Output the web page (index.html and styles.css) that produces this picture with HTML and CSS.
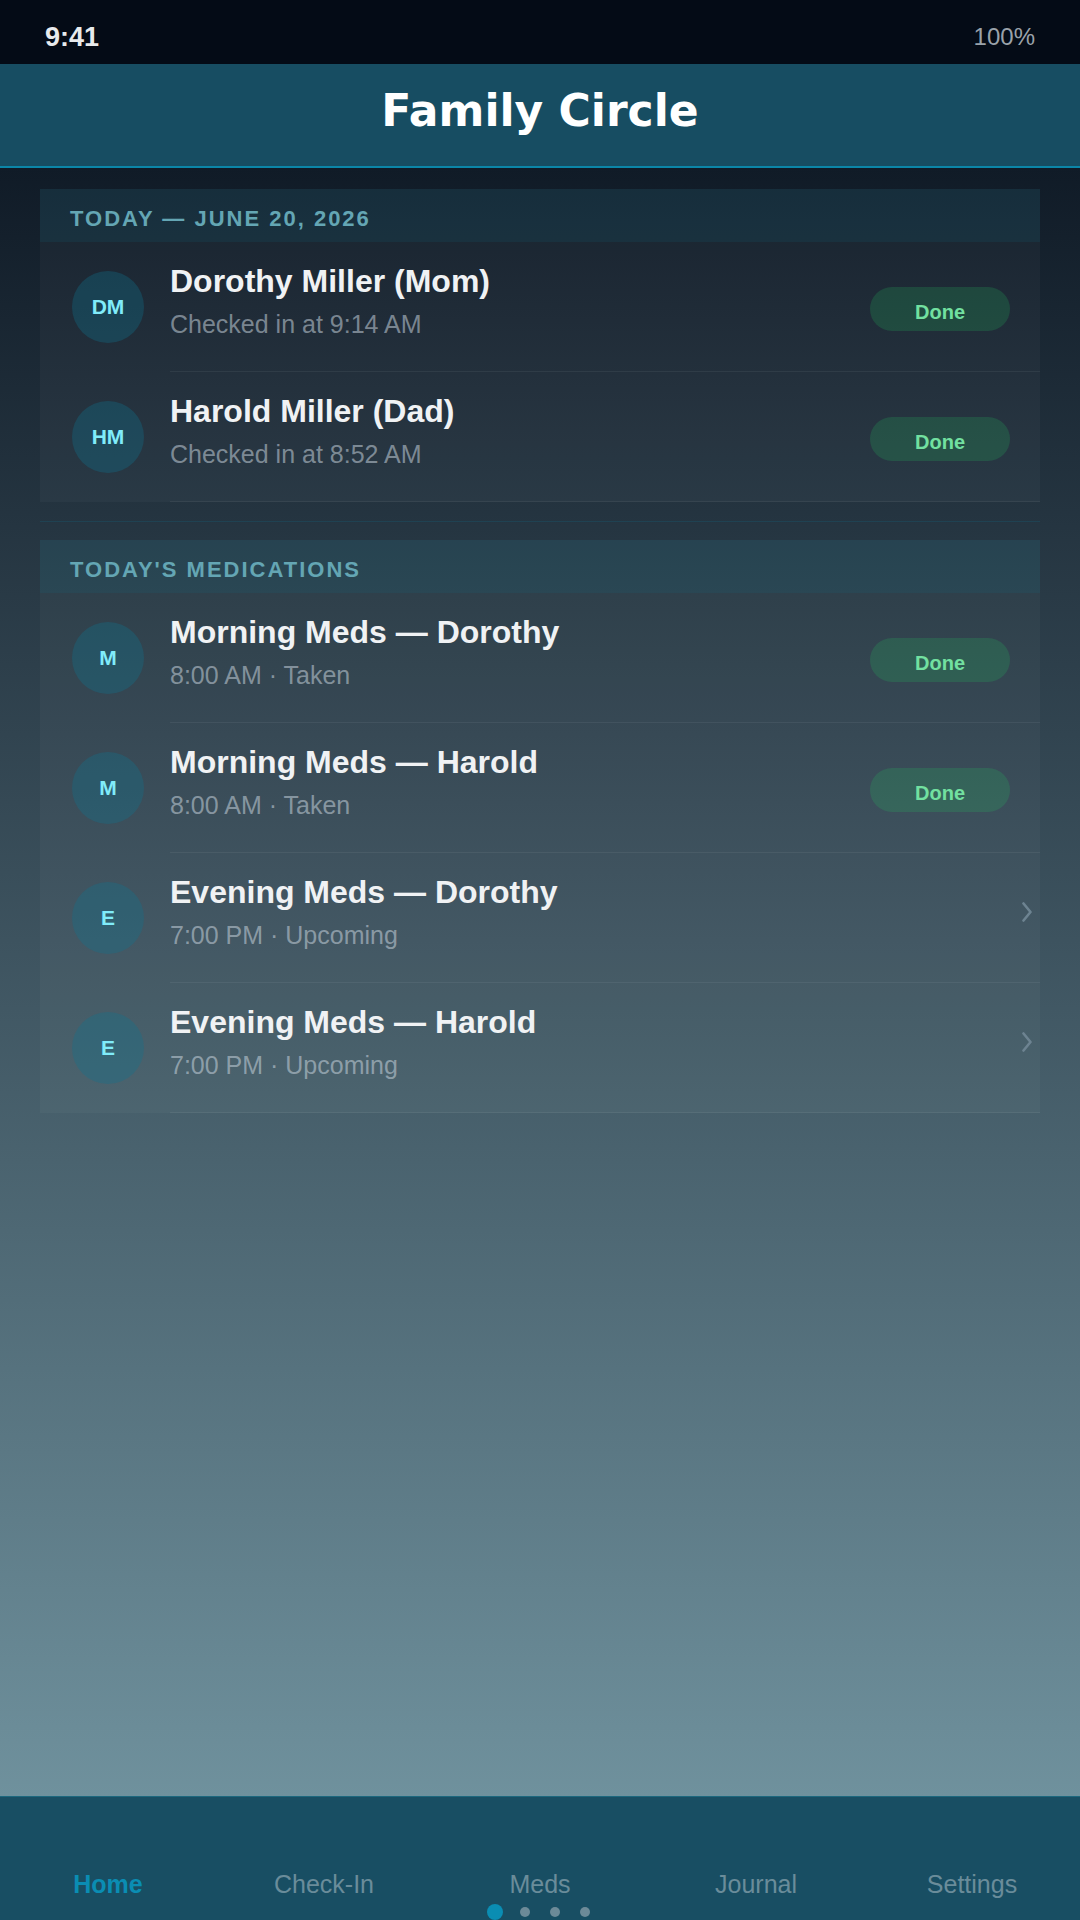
FILE: index.html
```html
<!DOCTYPE html>
<html lang="en">
<head>
  <meta charset="UTF-8" />
  <meta name="viewport" content="width=device-width, initial-scale=1.0" />
  <title>Family Circle</title>
  <link rel="stylesheet" href="styles.css">
</head>
<body>
  <div class="screen">
    <div class="status-bar">
      <span class="time">9:41</span>
      <span class="battery">100%</span>
    </div>

    <header class="app-header">
      <h1>Family Circle</h1>
    </header>

    <main class="content">
      <section class="card">
        <h2 class="card-title">TODAY — JUNE 20, 2026</h2>

        <div class="row">
          <div class="avatar">DM</div>
          <div class="row-body">
            <div class="info">
              <div class="name">Dorothy Miller (Mom)</div>
              <div class="sub">Checked in at 9:14 AM</div>
            </div>
            <span class="badge">Done</span>
          </div>
        </div>

        <div class="row">
          <div class="avatar">HM</div>
          <div class="row-body">
            <div class="info">
              <div class="name">Harold Miller (Dad)</div>
              <div class="sub">Checked in at 8:52 AM</div>
            </div>
            <span class="badge">Done</span>
          </div>
        </div>
      </section>

      <hr class="divider">

      <section class="card">
        <h2 class="card-title">TODAY'S MEDICATIONS</h2>

        <div class="row">
          <div class="avatar">M</div>
          <div class="row-body">
            <div class="info">
              <div class="name">Morning Meds — Dorothy</div>
              <div class="sub">8:00 AM · Taken</div>
            </div>
            <span class="badge">Done</span>
          </div>
        </div>

        <div class="row">
          <div class="avatar">M</div>
          <div class="row-body">
            <div class="info">
              <div class="name">Morning Meds — Harold</div>
              <div class="sub">8:00 AM · Taken</div>
            </div>
            <span class="badge">Done</span>
          </div>
        </div>

        <div class="row">
          <div class="avatar">E</div>
          <div class="row-body">
            <div class="info">
              <div class="name">Evening Meds — Dorothy</div>
              <div class="sub">7:00 PM · Upcoming</div>
            </div>
            <svg class="chev" viewBox="0 0 10 20" width="10" height="20">
              <polyline points="1.5,1.5 8.5,10 1.5,18.5" fill="none" stroke="currentColor" stroke-width="2.6" stroke-linecap="round" stroke-linejoin="round"/>
            </svg>
          </div>
        </div>

        <div class="row">
          <div class="avatar">E</div>
          <div class="row-body">
            <div class="info">
              <div class="name">Evening Meds — Harold</div>
              <div class="sub">7:00 PM · Upcoming</div>
            </div>
            <svg class="chev" viewBox="0 0 10 20" width="10" height="20">
              <polyline points="1.5,1.5 8.5,10 1.5,18.5" fill="none" stroke="currentColor" stroke-width="2.6" stroke-linecap="round" stroke-linejoin="round"/>
            </svg>
          </div>
        </div>
      </section>
    </main>

    <nav class="tab-bar">
      <div class="tabs">
        <a class="tab active" href="#">Home</a>
        <a class="tab" href="#">Check-In</a>
        <a class="tab" href="#">Meds</a>
        <a class="tab" href="#">Journal</a>
        <a class="tab" href="#">Settings</a>
      </div>
      <div class="dots">
        <span class="dot active"></span>
        <span class="dot"></span>
        <span class="dot"></span>
        <span class="dot"></span>
      </div>
    </nav>
  </div>
</body>
</html>
```

FILE: styles.css
```css
:root {
  --status-bg: #040b16;
  --header-bg: #174d62;
  --accent: #0a8db3;
  --text: #f0f2f4;
  --muted: rgba(200, 212, 222, 0.55);
  --section: #64a6b4;
  --avatar-bg: rgba(14, 116, 144, 0.33);
  --avatar-text: #80ecfa;
  --done-bg: rgba(34, 197, 94, 0.2);
  --done-text: #72e0a0;
}

body {
  margin: 0;
  font-family: 'Liberation Sans', Arial, sans-serif;
  color: var(--text);
  background: var(--status-bg);
}

.screen {
  width: 1080px;
  height: 1920px;
  display: flex;
  flex-direction: column;
  overflow: hidden;
}

.status-bar {
  height: 64px;
  box-sizing: border-box;
  padding: 21px 45px 0;
  display: flex;
  justify-content: space-between;
  align-items: flex-start;
  background: var(--status-bg);
  line-height: 32px;
}

.time {
  font-size: 27px;
  font-weight: 700;
  color: #e8eaec;
}

.battery {
  font-size: 24px;
  color: #9aa2aa;
}

.app-header {
  background: var(--header-bg);
  border-bottom: 2px solid #0b86a8;
  padding: 22px 0 30px;
}

.app-header h1 {
  margin: 0;
  text-align: center;
  font-family: 'DejaVu Sans', sans-serif;
  font-size: 44px;
  line-height: 50px;
  font-weight: 700;
  color: #fff;
}

.content {
  flex: 1;
  padding: 21px 40px 0;
  background: linear-gradient(#101b27, #6f919d);
}

.card {
  background: rgba(255, 255, 255, 0.03);
}

.card-title {
  margin: 0;
  padding: 17px 30px 10px;
  font-size: 22px;
  line-height: 26px;
  font-weight: 700;
  letter-spacing: 2px;
  color: var(--section);
  background: rgba(14, 116, 144, 0.14);
}

.row {
  display: flex;
  align-items: center;
  padding-left: 32px;
}

.avatar {
  width: 72px;
  height: 72px;
  flex: none;
  border-radius: 50%;
  background: var(--avatar-bg);
  color: var(--avatar-text);
  font-size: 21px;
  font-weight: 700;
  display: flex;
  align-items: center;
  justify-content: center;
}

.row-body {
  flex: 1;
  display: flex;
  align-items: center;
  min-height: 129px;
  margin-left: 26px;
  padding-right: 30px;
  border-bottom: 1px solid rgba(255, 255, 255, 0.06);
}

.info {
  flex: 1;
  padding-bottom: 13px;
}

.name {
  font-size: 32px;
  line-height: 38px;
  font-weight: 700;
}

.sub {
  margin-top: 9px;
  font-size: 25px;
  line-height: 30px;
  color: var(--muted);
}

.badge {
  width: 140px;
  height: 44px;
  box-sizing: border-box;
  padding-top: 5px;
  margin-top: 4px;
  border-radius: 22px;
  background: var(--done-bg);
  color: var(--done-text);
  font-size: 20px;
  line-height: 40px;
  font-weight: 700;
  text-align: center;
}

.chev {
  color: #6d8391;
  margin-right: -22px;
  margin-bottom: 12px;
}

.divider {
  border: none;
  height: 1px;
  margin: 19px 0 18px;
  background: rgba(14, 116, 144, 0.22);
}

.tab-bar {
  background: #184e63;
  border-top: 1px solid #1d687e;
  padding-top: 72px;
}

.tabs {
  display: grid;
  grid-template-columns: repeat(5, 1fr);
}

.tab {
  text-align: center;
  font-size: 25px;
  line-height: 30px;
  color: #6a8c9a;
  text-decoration: none;
}

.tab.active {
  color: var(--accent);
  font-weight: 700;
}

.dots {
  display: flex;
  justify-content: center;
  margin-top: 5px;
  height: 16px;
}

.dot {
  width: 30px;
  display: flex;
  align-items: center;
  justify-content: center;
}

.dot::before {
  content: "";
  width: 10px;
  height: 10px;
  border-radius: 50%;
  background: #6c8a98;
}

.dot.active::before {
  width: 16px;
  height: 16px;
  background: var(--accent);
}
```
